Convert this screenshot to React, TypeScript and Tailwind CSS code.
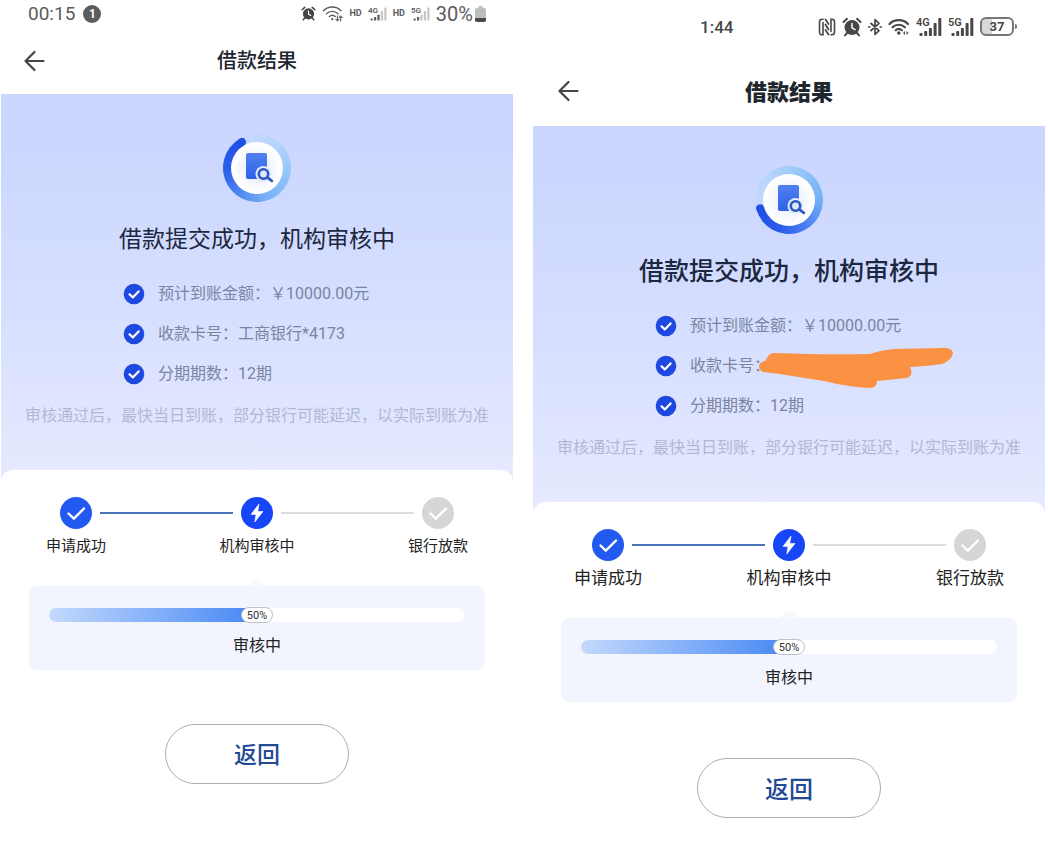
import type { ReactNode } from "react";
import clsx from "clsx";

type Size = "regular" | "large";

type LoanScreen = {
  size: Size;
  amount: string;
  card: string;
  cardHidden?: boolean;
  periods: string;
  progress: number;
};

const screens: LoanScreen[] = [
  { size: "regular", amount: "￥10000.00元", card: "工商银行*4173", periods: "12期", progress: 50 },
  { size: "large", amount: "￥10000.00元", card: "", cardHidden: true, periods: "12期", progress: 50 },
];

function AlarmIcon({ className }: { className: string }) {
  return (
    <svg viewBox="0 0 20 20" className={className} fill="none" stroke="currentColor" strokeLinecap="round">
      <circle cx="10" cy="10.5" r="7.5" fill="currentColor" stroke="none" />
      <path d="M1.5 5 5 1.8M18.5 5 15 1.8M5 16l-2 2.4M15 16l2 2.4" strokeWidth="2" />
      <path d="M10 6.5v4.3l3 1.8" stroke="white" strokeWidth="1.5" />
    </svg>
  );
}

function WifiIcon({ className, bold }: { className: string; bold?: boolean }) {
  return (
    <svg viewBox="0 0 22 18" className={className} fill="none" stroke="currentColor" strokeWidth={bold ? 2.2 : 1.5} strokeLinecap="round">
      <path d="M1.5 6C6.5 .9 15 .9 20 6M4.6 9.2c3.4-3.3 8.9-3.3 12.3 0M7.7 12.2c1.9-1.7 4.3-1.7 6.2 0" />
      <circle cx="10.8" cy="15" r={bold ? 1.8 : 1.2} fill="currentColor" stroke="none" />
      {bold ? (
        <path d="m17 13-2 2 2 2zM18.500 13l2 2-2 2z" fill="currentColor" stroke="none" />
      ) : (
        <path d="M16.2 11.5v5m-1.6-1.4 1.6 1.6 1.6-1.6M19.6 17v-5M18 13.3l1.6-1.6 1.6 1.6" strokeWidth="1.1" />
      )}
    </svg>
  );
}

function NfcIcon() {
  return (
    <svg viewBox="0 0 18 18" className="size-[18px]" fill="none" stroke="currentColor" strokeWidth="1.6" strokeLinecap="round">
      <path d="M5 1.200H4A2.500 2.500 0 0 0 1.500 3.700v10.600A2.500 2.500 0 0 0 4 16.800h1V4.500" />
      <path d="M13 16.800h1a2.500 2.500 0 0 0 2.500-2.500V3.700A2.500 2.500 0 0 0 14 1.200h-1V13.500" />
      <path d="M7.500 1.500 10.500 6M7.500 6.500l3 5M7.500 12l3 4.500" strokeWidth="1.8" />
    </svg>
  );
}

function BluetoothIcon() {
  return (
    <svg viewBox="0 0 14 18" className="h-[18px] w-[14px]" fill="none" stroke="currentColor" strokeWidth="1.7" strokeLinejoin="round">
      <path d="m2.5 5 8.5 7.7L7 16.5v-15L11 5.3 2.5 13" />
      <path d="M0 9h2.4M11.6 9H14" />
    </svg>
  );
}

function Signal({ label, active, className }: { label: string; active: number; className: string }) {
  return (
    <svg viewBox="0 0 26 20" className={className} fill="currentColor">
      <text x="0" y="9" fontSize="11" fontWeight="600" fontFamily="Roboto, sans-serif">
        {label}
      </text>
      {[3, 5, 8, 13, 18].map((height, index) => (
        <rect
          key={height}
          x={3.5 + index * 4.7}
          y={19 - height}
          width="3"
          height={height}
          rx="0.8"
          opacity={index < active ? 1 : 0.35}
        />
      ))}
    </svg>
  );
}

function StatusBarRegular() {
  return (
    <div className="flex h-[27px] items-center justify-between px-[27px] text-[#5c5c5c]">
      <div className="flex items-center gap-2">
        <span className="text-[19px] leading-6">00:15</span>
        <span className="flex size-[18px] items-center justify-center rounded-full bg-[#5c5c5c] text-xs leading-none font-bold text-white">
          1
        </span>
      </div>
      <div className="flex items-center gap-[6px]">
        <AlarmIcon className="size-[15px] text-[#444]" />
        <WifiIcon className="h-[17px] w-[21px]" />
        <span className="text-[9px] font-bold">HD</span>
        <Signal label="4G" active={3} className="h-4 w-[19px]" />
        <span className="text-[9px] font-bold">HD</span>
        <Signal label="5G" active={2} className="h-4 w-[19px]" />
        <div className="flex items-center gap-[2px]">
          <span className="text-xl leading-6">30%</span>
          <svg viewBox="0 0 11 16" className="h-4 w-[11px]">
            <path d="M3.5 0h4v2H9q2 0 2 2v10q0 2-2 2H2q-2 0-2-2V4q0-2 2-2h1.5z" fill="#bdbdbd" />
            <path d="M0 12h11v2q0 2-2 2H2q-2 0-2-2z" fill="#4a4a4a" />
          </svg>
        </div>
      </div>
    </div>
  );
}

function StatusBarLarge() {
  return (
    <div className="flex h-[59px] items-center justify-between pr-7 pb-1.5 pl-[167px] text-[#484848]">
      <span className="text-[17px] leading-6 font-medium">1:44</span>
      <div className="flex items-center gap-[6px]">
        <NfcIcon />
        <AlarmIcon className="size-5" />
        <BluetoothIcon />
        <WifiIcon className="h-[18px] w-[22px]" bold />
        <Signal label="4G" active={5} className="h-5 w-[26px]" />
        <Signal label="5G" active={5} className="h-5 w-[26px]" />
        <div className="flex items-center gap-px">
          <span className="flex h-[19px] w-[34px] items-center justify-center rounded-md border-2 border-[#777] bg-linear-to-r from-[#d9d9d9] from-35% to-white to-35% text-[13px] leading-none font-bold">
            37
          </span>
          <span className="h-[5px] w-[2px] rounded-r bg-[#777]" />
        </div>
      </div>
    </div>
  );
}

function ReviewBadge({ size }: { size: Size }) {
  return (
    <div className="relative size-[68px]">
      <div
        className={clsx(
          "absolute inset-0 rounded-full bg-[conic-gradient(#c8d9fe,#b4d5fb_20%,#90c4f8_38%,#74aef5_55%,#4a80f0_70%,#2c5de9_83%,#2150e6)]",
          size === "large" ? "rotate-[254deg]" : "rotate-[330deg]",
        )}
      >
        <span className="absolute top-0 left-[30px] size-2 rounded-full bg-[#2150e6]" />
      </div>
      <div className="absolute inset-2 rounded-full bg-radial from-[#dfe7ff] to-white to-65%" />
      <svg viewBox="0 0 68 68" className="absolute inset-0 size-full" fill="none">
        <defs>
          <linearGradient id={`doc-${size}`} x1="0" y1="0" x2="0" y2="1">
            <stop offset="0" stopColor="#5080ee" />
            <stop offset="1" stopColor="#2c62ea" />
          </linearGradient>
        </defs>
        <rect x="23" y="19" width="21" height="26" rx="2" fill={`url(#doc-${size})`} />
        <circle cx="40.5" cy="40" r="8" fill="#dfe9fe" />
        <circle cx="40.5" cy="40" r="4.7" stroke="#2f57c4" strokeWidth="2.6" />
        <path d="m44.5 43.5 4.3 3.3" stroke="#2f57c4" strokeWidth="2.8" strokeLinecap="round" />
      </svg>
    </div>
  );
}

function CheckDot() {
  return (
    <svg viewBox="0 0 22 22" className="size-[22px] shrink-0" fill="none">
      <circle cx="11" cy="11" r="10.3" fill="#1d49e0" />
      <path d="m6.5 11.3 3.3 3.1 5.8-6" stroke="white" strokeWidth="2.2" strokeLinecap="round" strokeLinejoin="round" />
    </svg>
  );
}

function DetailRow({ children }: { children: ReactNode }) {
  return (
    <li className="flex items-center gap-[13px]">
      <CheckDot />
      <span className="relative whitespace-nowrap">{children}</span>
    </li>
  );
}

// Marker stroke that covers the card number
function Scribble() {
  return (
    <svg viewBox="0 0 200 46" className="absolute -top-2.5 left-[66px] h-[46px] w-[200px]">
      <path
        d="M3 21Q4 17 9 16L11 13Q13 8 19 8Q70 10 114 9Q125 5 138 4L184 3Q196 2 197 8Q196 15 186 19Q172 21 154 22Q158 30 151 33L121 36Q121 43 114 43Q92 42 68 36L30 30Q16 28 7 27Q3 25 3 21Z"
        fill="#fb9142"
      />
    </svg>
  );
}

function Step({ label, state, size }: { label: string; state: "done" | "active" | "pending"; size: Size }) {
  return (
    <li className="flex w-8 shrink-0 flex-col items-center gap-[5px]">
      <svg viewBox="0 0 32 32" className="size-8" fill="none">
        <circle cx="16" cy="16" r="16" fill={state === "done" ? "#2259f0" : state === "active" ? "#1745f8" : "#d6d6d6"} />
        {state === "active" ? (
          <path d="M18 7 10 17.400H15L13.800 25 22 14.500H16.800Z" fill="white" stroke="white" strokeWidth="0.6" strokeLinejoin="round" />
        ) : (
          <path d="m8.5 16.5 5.300 5.200L24 11.500" stroke="white" strokeWidth="2.4" strokeLinecap="round" strokeLinejoin="round" />
        )}
      </svg>
      <span className={clsx("leading-6 whitespace-nowrap text-[#222]", size === "large" ? "text-[17px]" : "text-[15px]")}>
        {label}
      </span>
    </li>
  );
}

function LoanResult({ screen }: { screen: LoanScreen }) {
  const { size } = screen;
  const large = size === "large";

  return (
    <section className="min-w-0">
      {large ? <StatusBarLarge /> : <StatusBarRegular />}

      <header className="relative flex h-[67px] items-center justify-center">
        <button aria-label="返回上一页" className={clsx("absolute text-[#444]", large ? "left-6 pb-1" : "left-[22px]")}>
          <svg viewBox="0 0 22 22" className="size-[22px]" fill="none" stroke="currentColor" strokeWidth="2.2" strokeLinecap="round" strokeLinejoin="round">
            <path d="M11.5 2 2.500 11l9 9M3 11h17.500" />
          </svg>
        </button>
        <h1 className={clsx("text-[#20262e]", large ? "text-[22px] font-black" : "text-xl font-medium")}>借款结果</h1>
      </header>

      <div className="flex flex-col items-center bg-linear-to-b from-[#ccd7ff] from-15% via-[#d6dfff] via-55% to-[#e7eaff] pt-10 pb-[54px]">
        <ReviewBadge size={size} />
        <h2 className={clsx("mt-5 leading-9 text-[#1c2740]", large ? "text-[25px] font-medium" : "text-[23px]")}>
          借款提交成功，机构审核中
        </h2>
        <ul className="mt-[25px] flex flex-col gap-[18px] self-stretch pl-[122px] text-base leading-[22px] text-[#7b84a0]">
          <DetailRow>预计到账金额：{screen.amount}</DetailRow>
          <DetailRow>
            收款卡号：{screen.card}
            {screen.cardHidden && <Scribble />}
          </DetailRow>
          <DetailRow>分期期数：{screen.periods}</DetailRow>
        </ul>
        <p className="mt-[19px] text-base leading-6 whitespace-nowrap text-[#b1b8cf]">
          审核通过后，最快当日到账，部分银行可能延迟，以实际到账为准
        </p>
      </div>

      <div className="relative -mt-3 flex flex-col rounded-t-xl bg-white pt-[27px]">
        <ol className="flex px-[59px]">
          <Step label="申请成功" state="done" size={size} />
          <li aria-hidden="true" className="mx-2 mt-[15px] h-[2px] flex-1 bg-[#4a74b8]" />
          <Step label="机构审核中" state="active" size={size} />
          <li aria-hidden="true" className="mx-2 mt-[15px] h-[2px] flex-1 bg-[#dcdcdf]" />
          <Step label="银行放款" state="pending" size={size} />
        </ol>

        <div className="relative mx-7 mt-7 flex flex-col rounded-lg bg-[#f2f5fe] px-5 pt-[22px] pb-3">
          <svg viewBox="0 0 20 8" className="absolute -top-2 left-1/2 h-2 w-5 -translate-x-1/2">
            <path d="M0 8 8 1.5Q10 0 12 1.5L20 8Z" fill="#f7f9fe" />
          </svg>
          <div
            role="progressbar"
            aria-label="审核中"
            aria-valuenow={screen.progress}
            className="relative h-3.5 rounded-full bg-white"
          >
            <div
              className="h-full rounded-l-full bg-linear-to-r from-[#c3d9fb] to-[#4586f3]"
              style={{ width: `${screen.progress}%` }}
            />
            <span
              className="absolute -top-px flex h-4 w-8 -translate-x-1/2 items-center justify-center rounded-full border border-[#bcc5c5] bg-white text-[11px] leading-none text-[#333]"
              style={{ left: `${screen.progress}%` }}
            >
              {screen.progress}%
            </span>
          </div>
          <p className="mt-3 text-center text-base leading-6 text-[#222]">审核中</p>
        </div>

        <button
          className={clsx(
            "h-[60px] w-[184px] self-center rounded-full border border-[#a9afb3] bg-white pt-1 font-medium text-[#234a94]",
            large ? "mt-14 text-2xl" : "mt-[54px] text-[23px]",
          )}
        >
          返回
        </button>
      </div>
    </section>
  );
}

export default function App() {
  return (
    <main className="grid min-h-screen grid-cols-2 gap-5 bg-white pr-[3px] pl-px font-[Roboto,'Noto_Sans_CJK_SC',sans-serif]">
      {screens.map((screen) => (
        <LoanResult key={screen.size} screen={screen} />
      ))}
    </main>
  );
}
